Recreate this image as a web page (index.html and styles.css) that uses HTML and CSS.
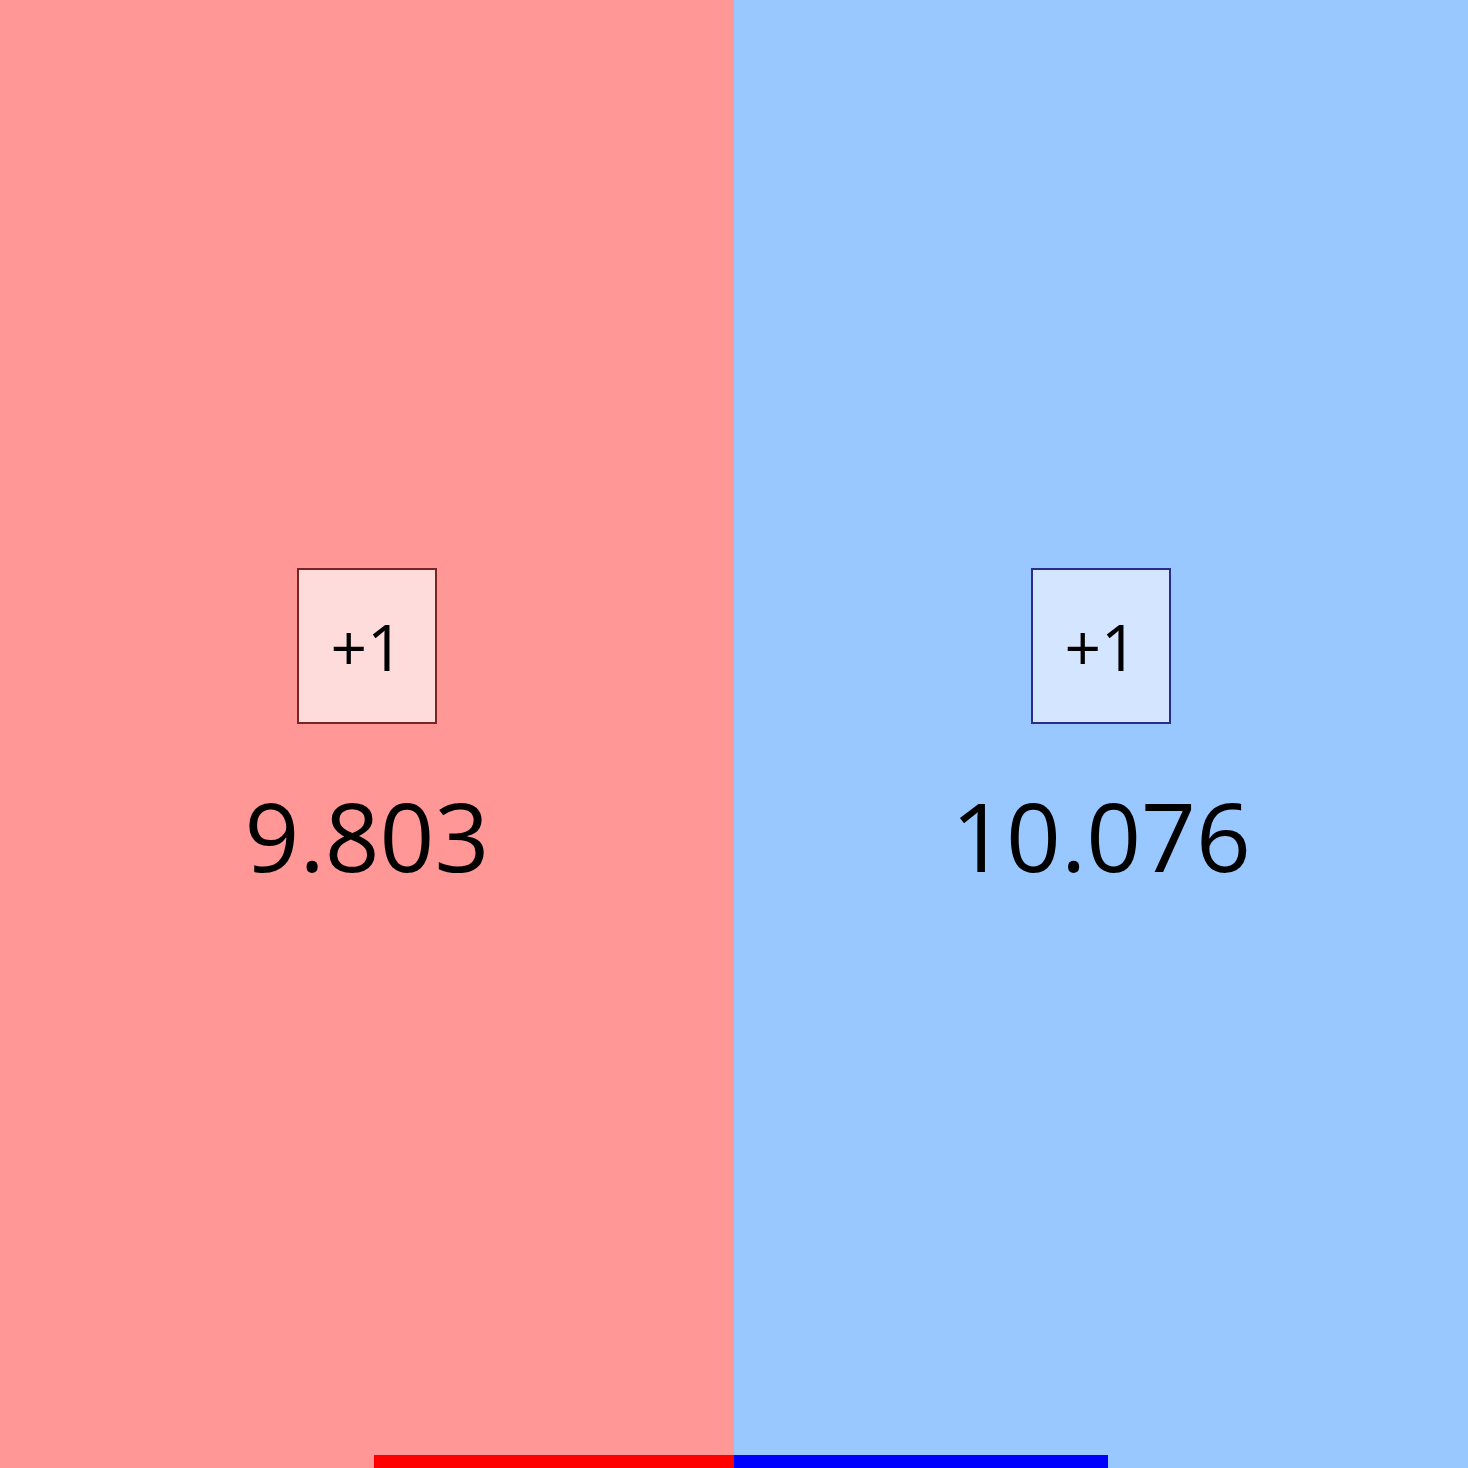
FILE: index.html
```html
<!DOCTYPE html>
<html>
<head>
<meta charset="utf-8">
<link rel="stylesheet" href="styles.css">
</head>
<body>
<div class="board">
  <div class="side side-red">
    <div class="stack">
      <button class="plus plus-red">+1</button>
      <div class="score">9.803</div>
    </div>
  </div>
  <div class="side side-blue">
    <div class="stack">
      <button class="plus plus-blue">+1</button>
      <div class="score">10.076</div>
    </div>
  </div>
</div>
<div class="meter">
  <div class="meter-red"></div>
  <div class="meter-blue"></div>
</div>
</body>
</html>
```
FILE: styles.css
```css
html, body {
  margin: 0;
  padding: 0;
  height: 100%;
  overflow: hidden;
}
body {
  font-family: "Open Sans", sans-serif;
  position: relative;
}
.board {
  display: flex;
  height: 100%;
}
.side {
  flex: 1;
  display: flex;
  align-items: center;
  justify-content: center;
}
.side-red { background: #ff9797; }
.side-blue { background: #99c7ff; }
.stack {
  display: flex;
  flex-direction: column;
  align-items: center;
  gap: 45px;
}
.plus {
  box-sizing: border-box;
  width: 140px;
  height: 156px;
  font-family: "Open Sans", sans-serif;
  font-size: 64px;
  color: #000;
  padding: 0;
  border: 2px solid;
  cursor: pointer;
}
.plus-red { background: #ffdcdc; border-color: #7c2424; }
.plus-blue { background: #d4e5ff; border-color: #2b2b8a; }
.score {
  font-size: 96px;
  line-height: 131px;
  color: #000;
}
.meter {
  position: absolute;
  bottom: 0;
  left: 374px;
  height: 13px;
  display: flex;
}
.meter-red { width: 360px; background: #ff0000; }
.meter-blue { width: 374px; background: #0000ff; }
```
